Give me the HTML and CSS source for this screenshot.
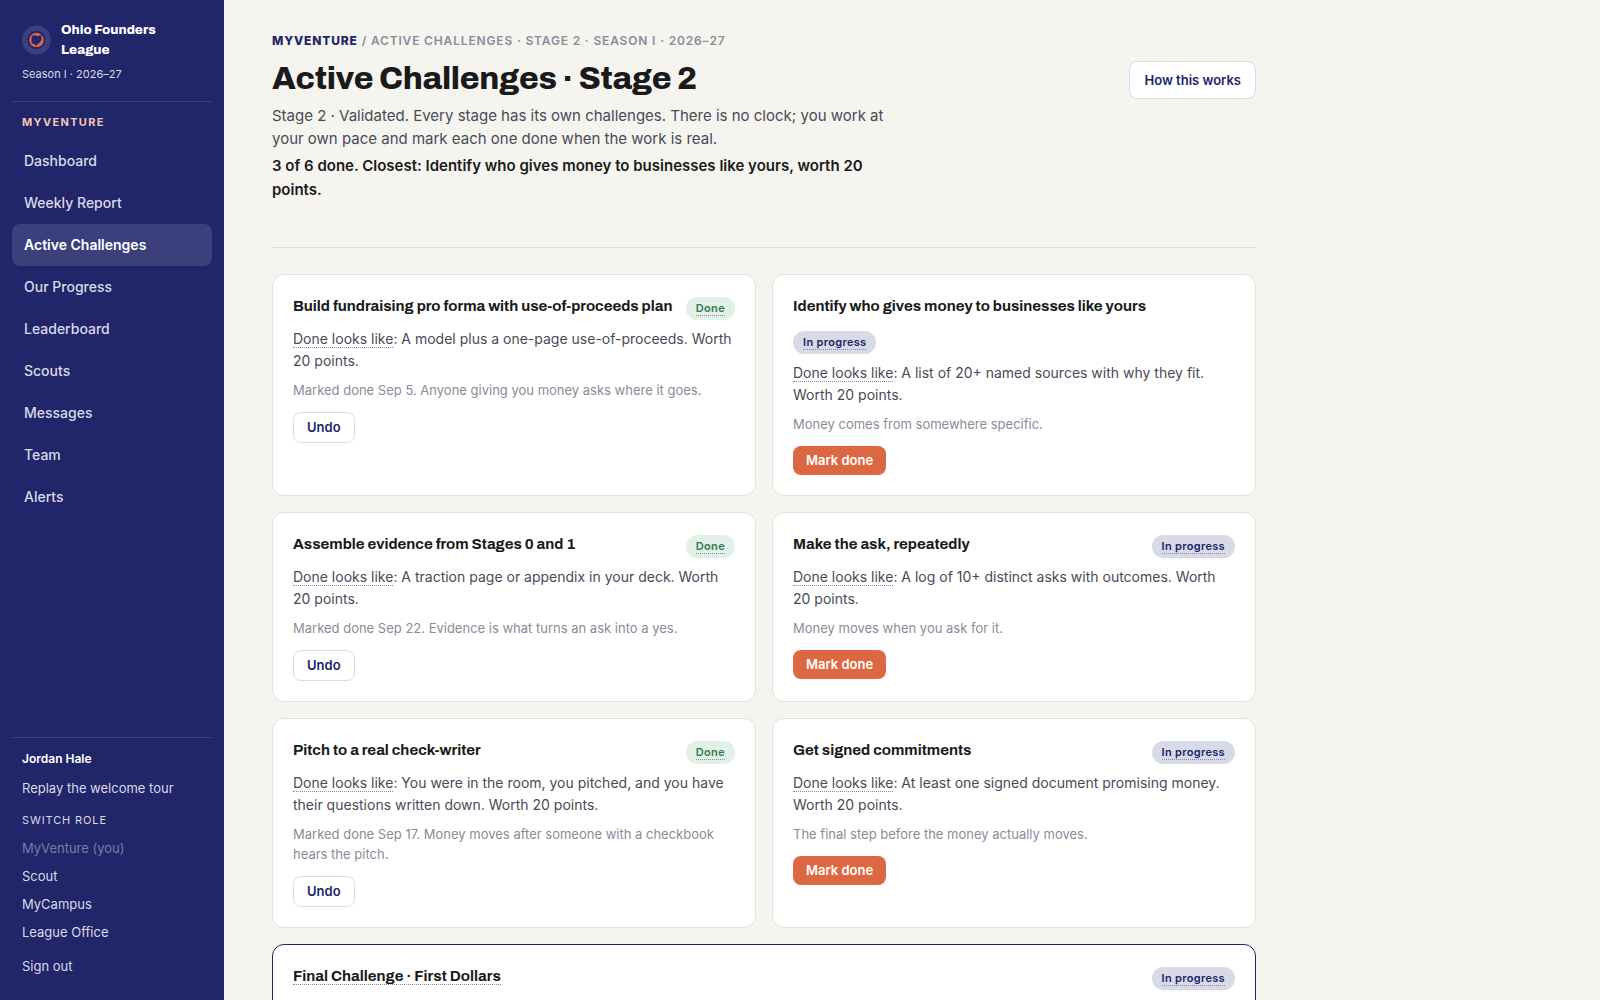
FILE: index.html
```html
<!DOCTYPE html>
<html lang="en">
<head>
    <meta charset="UTF-8">
    <meta name="viewport" content="width=device-width, initial-scale=1.0">
    <title>Active Challenges · Ohio Founders League</title>
    <link rel="stylesheet" href="styles.css">
</head>
<body>

    <div class="layout">
        <aside class="sidebar">
            <div class="brand">
                <div class="brand-row">
                    <svg class="brand-logo" viewBox="0 0 60 60" aria-hidden="true">
                        <circle cx="30" cy="30" r="30" fill="#3b3f7b"/>
                        <circle cx="30" cy="30" r="20" fill="#212569"/>
                        <circle cx="30" cy="30" r="20" fill="none" stroke="#6b6e9d" stroke-width="2" stroke-dasharray="2 4"/>
                        <circle cx="30" cy="30" r="15" fill="#dc6843"/>
                        <path d="M20 21l8-1 4 2 8-3v11l-3 5-4 3-3 4-6-4-4-1z" fill="#212569"/>
                    </svg>
                    <span class="brand-name">Ohio Founders League</span>
                </div>
                <div class="brand-season">Season I · 2026–27</div>
            </div>

            <div class="nav-label">MyVenture</div>
            <nav class="nav">
                <a href="#">Dashboard</a>
                <a href="#">Weekly Report</a>
                <a href="#" class="active">Active Challenges</a>
                <a href="#">Our Progress</a>
                <a href="#">Leaderboard</a>
                <a href="#">Scouts</a>
                <a href="#">Messages</a>
                <a href="#">Team</a>
                <a href="#">Alerts</a>
            </nav>

            <div class="account">
                <div class="account-name">Jordan Hale</div>
                <button type="button" class="account-link">Replay the welcome tour</button>
                <div class="switch-label">Switch role</div>
                <div class="roles">
                    <button type="button" class="account-link" disabled>MyVenture (you)</button>
                    <button type="button" class="account-link">Scout</button>
                    <button type="button" class="account-link">MyCampus</button>
                    <button type="button" class="account-link">League Office</button>
                </div>
                <button type="button" class="account-link">Sign out</button>
            </div>
        </aside>

        <main class="main">
            <header class="page-header">
                <div class="page-intro">
                    <div class="breadcrumb"><strong>MyVenture</strong> / Active Challenges · Stage 2 · Season I · 2026–27</div>
                    <h1>Active Challenges · Stage 2</h1>
                    <p class="lead">Stage 2 · Validated. Every stage has its own challenges. There is no clock; you work at your own pace and mark each one done when the work is real.</p>
                    <p class="status">3 of 6 done. Closest: Identify who gives money to businesses like yours, worth 20 points.</p>
                </div>
                <button type="button" class="btn btn-help">How this works</button>
            </header>

            <section class="cards">
                <article class="card">
                    <div class="card-head">
                        <h2>Build fundraising pro forma with use-of-proceeds plan</h2>
                        <span class="pill pill-done"><span class="term">Done</span></span>
                    </div>
                    <p class="goal"><span class="term">Done looks like</span>: A model plus a one-page use-of-proceeds. Worth 20 points.</p>
                    <p class="note">Marked done Sep 5. Anyone giving you money asks where it goes.</p>
                    <button type="button" class="btn btn-undo">Undo</button>
                </article>

                <article class="card">
                    <div class="card-head">
                        <h2>Identify who gives money to businesses like yours</h2>
                        <span class="pill pill-progress"><span class="term">In progress</span></span>
                    </div>
                    <p class="goal"><span class="term">Done looks like</span>: A list of 20+ named sources with why they fit. Worth 20 points.</p>
                    <p class="note">Money comes from somewhere specific.</p>
                    <button type="button" class="btn btn-primary">Mark done</button>
                </article>

                <article class="card">
                    <div class="card-head">
                        <h2>Assemble evidence from Stages 0 and 1</h2>
                        <span class="pill pill-done"><span class="term">Done</span></span>
                    </div>
                    <p class="goal"><span class="term">Done looks like</span>: A traction page or appendix in your deck. Worth 20 points.</p>
                    <p class="note">Marked done Sep 22. Evidence is what turns an ask into a yes.</p>
                    <button type="button" class="btn btn-undo">Undo</button>
                </article>

                <article class="card">
                    <div class="card-head">
                        <h2>Make the ask, repeatedly</h2>
                        <span class="pill pill-progress"><span class="term">In progress</span></span>
                    </div>
                    <p class="goal"><span class="term">Done looks like</span>: A log of 10+ distinct asks with outcomes. Worth 20 points.</p>
                    <p class="note">Money moves when you ask for it.</p>
                    <button type="button" class="btn btn-primary">Mark done</button>
                </article>

                <article class="card">
                    <div class="card-head">
                        <h2>Pitch to a real check-writer</h2>
                        <span class="pill pill-done"><span class="term">Done</span></span>
                    </div>
                    <p class="goal"><span class="term">Done looks like</span>: You were in the room, you pitched, and you have their questions written down. Worth 20 points.</p>
                    <p class="note">Marked done Sep 17. Money moves after someone with a checkbook hears the pitch.</p>
                    <button type="button" class="btn btn-undo">Undo</button>
                </article>

                <article class="card">
                    <div class="card-head">
                        <h2>Get signed commitments</h2>
                        <span class="pill pill-progress"><span class="term">In progress</span></span>
                    </div>
                    <p class="goal"><span class="term">Done looks like</span>: At least one signed document promising money. Worth 20 points.</p>
                    <p class="note">The final step before the money actually moves.</p>
                    <button type="button" class="btn btn-primary">Mark done</button>
                </article>

                <article class="card card-final">
                    <div class="card-head">
                        <h2><span class="term">Final Challenge · First Dollars</span></h2>
                        <span class="pill pill-progress"><span class="term">In progress</span></span>
                    </div>
                </article>
            </section>
        </main>
    </div>

</body>
</html>
```

FILE: styles.css
```css
* {
    box-sizing: border-box;
}
body {
    margin: 0;
    font-family: Inter, "Liberation Sans", sans-serif;
    font-size: 14px;
    line-height: 22px;
    color: #1a1a1a;
    background: #f5f4ef;
}
h1, h2, p {
    margin: 0;
}
button {
    font-family: inherit;
    cursor: pointer;
}
.layout {
    display: flex;
    align-items: flex-start;
}

/* Sidebar */
.sidebar {
    position: sticky;
    top: 0;
    flex: 0 0 224px;
    height: 100vh;
    padding: 20px 12px;
    display: flex;
    flex-direction: column;
    background: #212569;
    color: #d9dae7;
}
.brand {
    padding: 0 10px 17px;
    border-bottom: 1px solid #3b3f7b;
}
.brand-row {
    display: flex;
    align-items: center;
    gap: 10px;
}
.brand-logo {
    flex: none;
    width: 29px;
    height: 30px;
}
.brand-name {
    font-family: Archivo, Inter, sans-serif;
    font-weight: 800;
    font-size: 13px;
    line-height: 20px;
    color: #fff;
}
.brand-season {
    margin-top: 4px;
    font-size: 11px;
    line-height: 20px;
}
.nav-label {
    padding: 10px 10px 8px;
    font-size: 11px;
    line-height: 20px;
    font-weight: 700;
    letter-spacing: 0.12em;
    text-transform: uppercase;
    color: #f3c6b5;
}
.nav a {
    display: block;
    padding: 10px 12px;
    border-radius: 8px;
    font-weight: 500;
    color: #d9dae7;
    text-decoration: none;
}
.nav a.active {
    background: #3b3f7b;
    color: #fff;
    font-weight: 600;
}
.account {
    margin-top: auto;
    padding: 10px 10px 0;
    border-top: 1px solid #3b3f7b;
    display: flex;
    flex-direction: column;
    align-items: flex-start;
}
.account-name {
    margin-bottom: 4px;
    font-size: 12px;
    font-weight: 600;
    color: #fff;
}
.account-link {
    padding: 3px 0;
    border: 0;
    background: none;
    font-size: 13px;
    line-height: 22px;
    color: #d9dae7;
}
.account-link:disabled {
    color: #7a7ca5;
    cursor: default;
}
.switch-label {
    margin: 8px 0 4px;
    font-size: 11px;
    line-height: 20px;
    letter-spacing: 0.08em;
    text-transform: uppercase;
}
.roles {
    display: flex;
    flex-direction: column;
    align-items: flex-start;
    margin-bottom: 6px;
}

/* Page */
.main {
    flex: 1;
    max-width: 1080px;
    padding: 30px 48px;
}
.page-header {
    display: flex;
    align-items: flex-start;
    justify-content: space-between;
    gap: 24px;
    padding-bottom: 45px;
    margin-bottom: 26px;
    border-bottom: 1px solid #e0dfd9;
}
.page-intro {
    max-width: 620px;
}
.breadcrumb {
    font-size: 12px;
    font-weight: 600;
    letter-spacing: 0.07em;
    text-transform: uppercase;
    color: #8b8b99;
}
.breadcrumb strong {
    font-weight: 800;
    color: #212569;
}
h1 {
    margin: 7px 0 5px;
    font-family: Archivo, Inter, sans-serif;
    font-size: 32px;
    line-height: 40px;
    font-weight: 800;
    letter-spacing: -0.01em;
}
.lead {
    font-size: 15px;
    line-height: 23px;
    color: #4a4a57;
}
.status {
    margin-top: 4px;
    font-size: 15px;
    line-height: 24px;
    font-weight: 600;
}

/* Cards */
.cards {
    display: grid;
    grid-template-columns: 1fr 1fr;
    gap: 16px;
}
.card {
    padding: 20px;
    border: 1px solid #e3e2da;
    border-radius: 12px;
    background: #fff;
}
.card-final {
    grid-column: 1 / -1;
    border-color: #212569;
}
.card-head {
    display: flex;
    flex-wrap: wrap;
    align-items: flex-start;
    justify-content: space-between;
    gap: 12px;
    margin-bottom: 8px;
}
.card h2 {
    font-family: Archivo, "Liberation Sans", sans-serif;
    font-size: 15px;
    line-height: 22px;
    font-weight: 700;
}
.term {
    border-bottom: 1px dotted #8b8b99;
}
.pill {
    margin-top: 2px;
    padding: 2px 10px;
    border-radius: 12px;
    font-size: 11px;
    line-height: 19px;
    font-weight: 600;
    letter-spacing: 0.03em;
}
.pill-done {
    background: #e2f0e7;
    color: #2e7d4f;
}
.pill-progress {
    background: #d9dae7;
    color: #212569;
}
.goal {
    color: #4a4a57;
}
.note {
    margin: 8px 0 12px;
    font-size: 13px;
    line-height: 20px;
    color: #8b8b99;
}
.btn {
    display: block;
    padding: 6px 13px;
    border: 0;
    border-radius: 8px;
    font-size: 13px;
    line-height: 17px;
    font-weight: 600;
}
.btn-undo,
.btn-help {
    border: 1px solid #d9dae7;
    background: #fff;
    color: #212569;
}
.btn-help {
    margin-top: 31px;
    padding: 10px 14px;
    line-height: 16px;
}
.btn-primary {
    background: #dc6843;
    color: #fff;
}
```
